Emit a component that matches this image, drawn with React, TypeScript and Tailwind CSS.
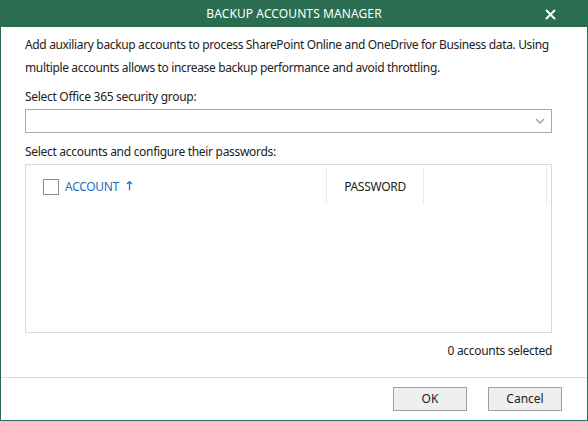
import React from "react";

const font = { fontFamily: '"Noto Sans", "Segoe UI", sans-serif' };

function Chevron() {
  return (
    <svg width="10" height="6" viewBox="0 0 10 6" fill="none">
      <path d="M1 1l4 4 4-4" stroke="#a6a6a6" strokeWidth="1.6" />
    </svg>
  );
}

export default function App() {
  return (
    <div
      className="w-[588px] h-[421px] flex flex-col bg-[#2b6d50] overflow-hidden text-[12px] text-[#222]"
      style={font}
    >
      <header className="h-[27px] shrink-0 flex items-center justify-center relative text-white text-[12px]">
        <span className="tracking-[0.1px]">BACKUP ACCOUNTS MANAGER</span>
        <button className="absolute right-[32px] top-[8px] w-[12px] h-[12px] flex items-center justify-center">
          <svg width="11" height="11" viewBox="0 0 11 11">
            <path d="M1 1l9 9M10 1l-9 9" stroke="white" strokeWidth="2" />
          </svg>
        </button>
      </header>

      <div className="flex-1 mx-px mb-px bg-white flex flex-col min-h-0">
        <div className="flex-1 flex flex-col pl-[24px] pr-[35px] pt-[6px] min-h-0">
          <p className="leading-[23px] tracking-[-0.35px]">
            Add auxiliary backup accounts to process SharePoint Online and OneDrive for Business data. Using
            multiple accounts allows to increase backup performance and avoid throttling.
          </p>

          <label className="mt-[9px] leading-[18px] tracking-[-0.3px]">Select Office 365 security group:</label>
          <div className="mt-[3px] h-[24px] border border-[#a9a9a9] flex items-center justify-end pr-[6px]">
            <Chevron />
          </div>

          <label className="mt-[10px] leading-[18px] tracking-[-0.3px]">
            Select accounts and configure their passwords:
          </label>
          <div className="mt-[3px] h-[169px] border border-[#d9d9d9] flex flex-col">
            <div className="h-[43px] flex items-stretch">
              <div className="w-[300px] flex items-center pl-[17px] gap-[6px]">
                <span className="w-[16px] h-[16px] border border-[#8c8c8c] bg-white" />
                <span className="text-[#1f6fb6] tracking-[-0.3px]">ACCOUNT</span>
                <svg width="7" height="11" viewBox="0 0 7 11" className="ml-[1px] -mt-[2px]">
                  <path d="M3.5 10.5V1.5M1 4l2.5-2.5L6 4" stroke="#1f6fb6" strokeWidth="1.2" fill="none" />
                </svg>
              </div>
              <div className="w-px my-[3px] bg-[#ececec]" />
              <div className="w-[96px] flex items-center justify-center tracking-[-0.3px]">PASSWORD</div>
              <div className="w-px my-[3px] bg-[#ececec]" />
              <div className="flex-1" />
              <div className="w-px my-[3px] bg-[#ececec] mr-[4px]" />
            </div>
          </div>

          <div className="mt-[9px] text-right leading-[18px] tracking-[-0.3px]">0 accounts selected</div>
        </div>

        <footer className="h-[43px] shrink-0 border-t border-[#dcdcdc] flex items-start justify-end gap-[21px] pr-[25px] pt-[9px]">
          <button className="w-[74px] h-[24px] bg-[#efefef] border border-[#a0a0a0] leading-none">OK</button>
          <button className="w-[74px] h-[24px] bg-[#efefef] border border-[#a0a0a0] leading-none">Cancel</button>
        </footer>
      </div>
    </div>
  );
}
